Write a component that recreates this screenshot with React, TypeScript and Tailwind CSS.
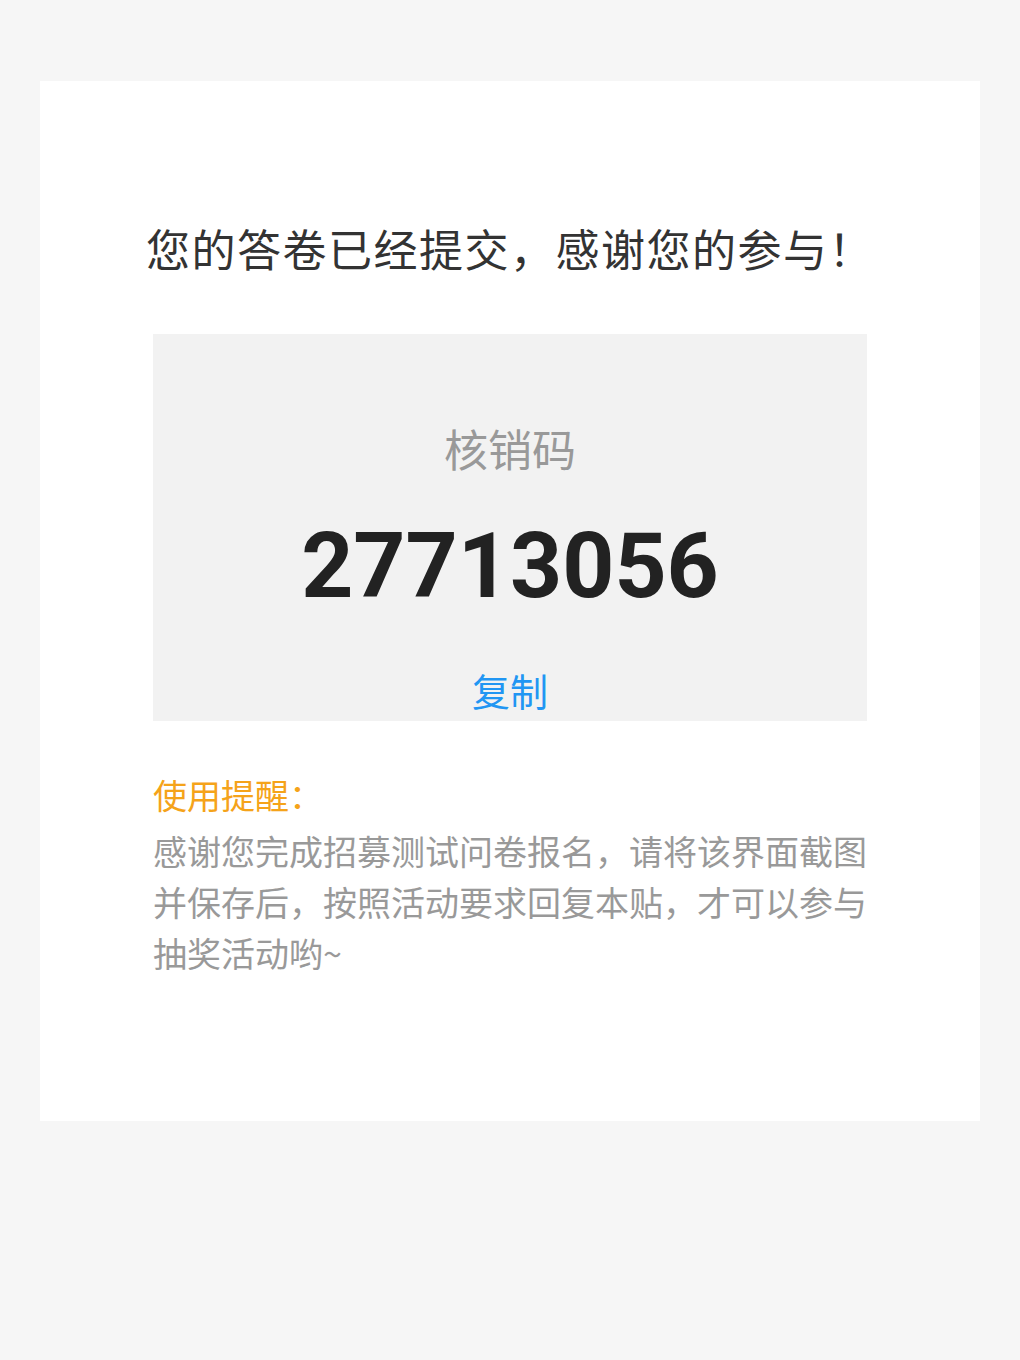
const CJK = "font-['Noto_Sans_CJK_SC','Noto_Sans',sans-serif]"

const App = () => {
  return (
    <div className={`min-h-[1360px] bg-[#f6f6f6] pt-[81px] ${CJK}`}>
      <div className="mx-[40px] h-[1040px] bg-white pt-[137px]">
        <div className="pl-[106px] text-[44px] leading-[60px] tracking-[1.5px] text-[#333333] whitespace-nowrap">
          您的答卷已经提交，感谢您的参与！
        </div>

        <div className="ml-[113px] mt-[56px] h-[387px] w-[714px] bg-[#f2f2f2] pt-[84px] text-center">
          <div className="text-[44px] leading-[60px] text-[#999999]">核销码</div>
          <div className="mt-[38px] font-['Roboto',sans-serif] text-[91px] font-bold leading-[100px] text-[#222222]">
            27713056
          </div>
          <div className="mt-[49px] text-[38px] leading-[50px] text-[#2196f3]">复制</div>
        </div>

        <div className="ml-[113px] mt-[48px] w-[720px]">
          <div className="text-[34px] leading-[51px] text-[#f5a31a]">使用提醒：</div>
          <div className="mt-[5px] text-[34px] leading-[51px] text-[#999999]">
            <div className="whitespace-nowrap">感谢您完成招募测试问卷报名，请将该界面截图</div>
            <div className="whitespace-nowrap">并保存后，按照活动要求回复本贴，才可以参与</div>
            <div className="whitespace-nowrap">抽奖活动哟~</div>
          </div>
        </div>
      </div>
    </div>
  )
}

export default App
